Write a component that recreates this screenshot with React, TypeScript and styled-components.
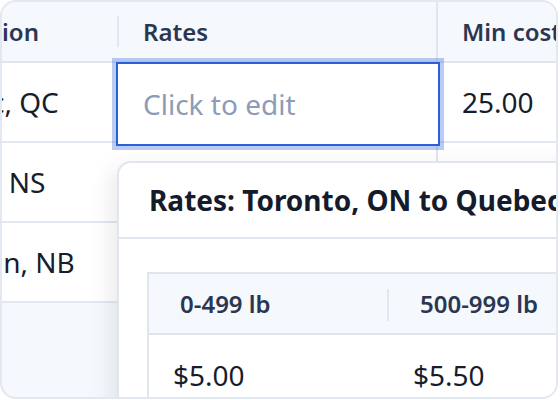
import { Fragment } from "react";
import styled, { createGlobalStyle } from "styled-components";

const GlobalStyle = createGlobalStyle`
  html, body {
    margin: 0;
    background: #ffffff;
  }
  body {
    font-family: "Noto Sans", "Open Sans", sans-serif;
  }
`;

const Frame = styled.div`
  position: relative;
  width: 558px;
  height: 399px;
  box-sizing: border-box;
  border: 2px solid #e2e8f0;
  border-radius: 16px;
  overflow: hidden;
  background: #f5f8fc;
`;

const Table = styled.div`
  display: grid;
  grid-template-columns: 240px 319px 240px;
  margin-left: -125px;
`;

const HeadCell = styled.div<{ $divider?: "short" | "full" }>`
  position: relative;
  box-sizing: border-box;
  height: 61px;
  display: flex;
  align-items: center;
  padding-left: ${(p) => (p.$divider === "full" ? "24px" : "26px")};
  background: #f5f8fc;
  border-bottom: 2px solid #e0e6ee;
  border-left: ${(p) => (p.$divider === "full" ? "2px solid #e0e6ee" : "none")};
  font-size: 24px;
  font-weight: 600;
  color: #2b3651;
  white-space: nowrap;

  ${(p) =>
    p.$divider === "short" &&
    `
    &::before {
      content: "";
      position: absolute;
      left: 0;
      top: 14px;
      width: 2px;
      height: 31px;
      background: #e3e8ef;
    }
  `}
`;

const Cell = styled.div<{ $divider?: boolean }>`
  position: relative;
  box-sizing: border-box;
  height: 80px;
  display: flex;
  align-items: center;
  padding-left: ${(p) => (p.$divider ? "24px" : "26px")};
  background: #ffffff;
  border-bottom: 2px solid #e2e8f0;
  border-left: ${(p) => (p.$divider ? "2px solid #e0e6ee" : "none")};
  font-size: 28px;
  color: #161d2b;
  white-space: nowrap;
`;

const EditInput = styled.input`
  position: absolute;
  left: -1px;
  top: -1px;
  width: 324px;
  height: 84px;
  box-sizing: border-box;
  margin: 0;
  padding: 0 0 0 25px;
  border: 2px solid #2c60d8;
  border-radius: 0;
  outline: none;
  background: #ffffff;
  box-shadow: 0 0 0 4px rgba(44, 96, 216, 0.32);
  font-family: inherit;
  font-size: 28px;
  color: #161d2b;
  z-index: 2;

  &::placeholder {
    color: #8d9bb6;
    opacity: 1;
  }
`;

const Popover = styled.div`
  position: absolute;
  left: 115px;
  top: 159px;
  width: 520px;
  height: 320px;
  box-sizing: border-box;
  border: 2px solid #e0e6ee;
  border-radius: 14px;
  background: #ffffff;
  box-shadow: -4px 8px 24px rgba(15, 23, 42, 0.1);
  z-index: 3;
`;

const PopoverHeader = styled.div`
  height: 76px;
  box-sizing: border-box;
  display: flex;
  align-items: center;
  padding: 0 30px;
  border-bottom: 2px solid #e0e6ee;
  font-size: 28px;
  font-weight: 700;
  color: #141b2b;
  white-space: nowrap;
`;

const PopoverBody = styled.div`
  padding: 33px 0 0 28px;
`;

const RateTable = styled.div`
  display: grid;
  grid-template-columns: 240px 240px;
  border: 2px solid #e0e6ee;
  border-right: none;
`;

const RateHead = styled.div<{ $divider?: boolean }>`
  position: relative;
  box-sizing: border-box;
  height: 61px;
  display: flex;
  align-items: center;
  padding-left: 31px;
  background: #f5f8fc;
  border-bottom: 2px solid #e0e6ee;
  font-size: 24px;
  font-weight: 600;
  color: #2b3651;
  white-space: nowrap;

  ${(p) =>
    p.$divider &&
    `
    &::before {
      content: "";
      position: absolute;
      left: -2px;
      top: 15px;
      width: 2px;
      height: 32px;
      background: #e3e8ef;
    }
  `}
`;

const RateCell = styled.div`
  box-sizing: border-box;
  height: 80px;
  display: flex;
  align-items: center;
  padding-left: 24px;
  font-size: 28px;
  color: #161d2b;
  white-space: nowrap;
`;

const rows = [
  { dest: "Quebec, QC", min: "25.00", editing: true },
  { dest: "Halifax, NS", min: "", editing: false },
  { dest: "Moncton, NB", min: "", editing: false },
];

export default function App() {
  return (
    <>
      <GlobalStyle />
      <Frame>
        <Table>
          <HeadCell>Destination</HeadCell>
          <HeadCell $divider="short">Rates</HeadCell>
          <HeadCell $divider="full">Min cost</HeadCell>
          {rows.map((r) => (
            <Fragment key={r.dest}>
              <Cell>{r.dest}</Cell>
              <Cell>
                {r.editing && <EditInput placeholder="Click to edit" />}
              </Cell>
              <Cell $divider>{r.min}</Cell>
            </Fragment>
          ))}
        </Table>
        <Popover>
          <PopoverHeader>Rates: Toronto, ON to Quebec, QC</PopoverHeader>
          <PopoverBody>
            <RateTable>
              <RateHead>0-499 lb</RateHead>
              <RateHead $divider>500-999 lb</RateHead>
              <RateCell>$5.00</RateCell>
              <RateCell>$5.50</RateCell>
            </RateTable>
          </PopoverBody>
        </Popover>
      </Frame>
    </>
  );
}
